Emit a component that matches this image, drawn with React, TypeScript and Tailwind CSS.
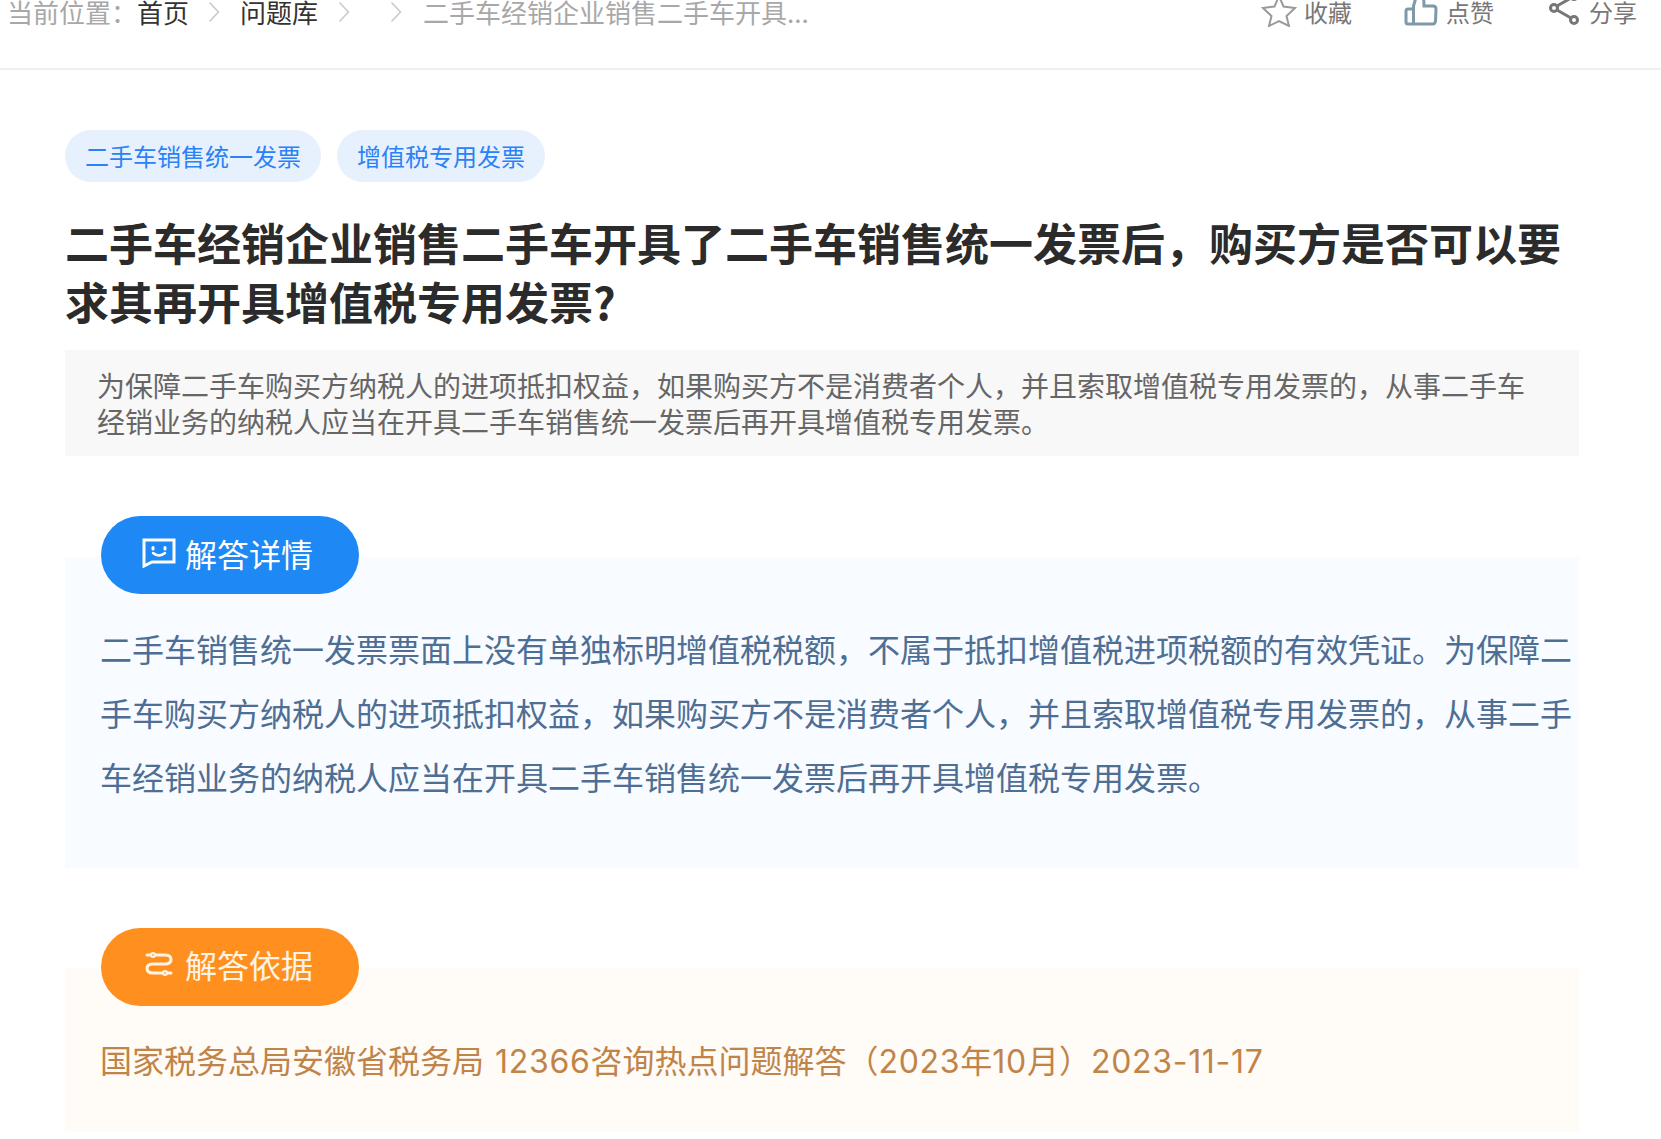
import React from "react";

function Chevron({ className }: { className?: string }) {
  return (
    <svg width="12" height="22" viewBox="0 0 12 22" fill="none" stroke="#c4c8cf" strokeWidth="1.5" className={className}>
      <path d="M1.5 1.5 L10.5 11 L1.5 20.5" />
    </svg>
  );
}

export default function App() {
  return (
    <div className="w-[1661px] h-[1139px] overflow-hidden bg-white font-['Noto_Sans_CJK_SC','Noto_Sans',sans-serif]">
      <header className="relative h-[70px] border-b-2 border-[#f0f0f0] flex justify-between pl-[7px] pr-[24px] text-[26px] leading-[26px]">
        <div className="flex items-start text-[#a8a8a8]">
          <span className="-mt-[1px]">当前位置：</span>
          <span className="-mt-[1px] text-[#333]">首页</span>
          <Chevron className="ml-[19px] mr-[20px] mt-[1px]" />
          <span className="-mt-[1px] text-[#333]">问题库</span>
          <Chevron className="ml-[20px] mt-[1px]" />
          <Chevron className="ml-[40px] mr-[21px] mt-[1px]" />
          <span className="-mt-[1px] whitespace-nowrap">二手车经销企业销售二手车开具...</span>
        </div>
        <div className="flex items-start text-[24px] leading-[24px] text-[#777]">
          <svg width="36" height="32" viewBox="0 0 36 32" fill="none" stroke="#9a9a9a" strokeWidth="2" className="-mt-[5px]">
            <path d="M18 1 L22.500 11.500 L34 13 L25.500 21 L28 31 L18 26 L8 31 L10.500 21 L2 13 L13.500 11.500 Z" />
          </svg>
          <span className="ml-[7px] mr-[52px]">收藏</span>
          <svg width="34" height="30" viewBox="0 0 34 30" fill="none" stroke="#7d9aa8" strokeWidth="3" className="-mt-[3px]">
            <path d="M9 12 H4 Q2 12 2 14 V25 Q2 27 4 27 H29 Q31 27 31.500 24 L32 12 Q32 9 29 9 H20 L19.500 -6 Q14 -6 13 -3 L9.500 9 V27" />
          </svg>
          <span className="ml-[8px] mr-[55px]">点赞</span>
          <svg width="32" height="30" viewBox="0 0 32 30" fill="none" stroke="#777" strokeWidth="3" className="-mt-[3px]">
            <circle cx="5" cy="11" r="3.500" />
            <circle cx="25" cy="23" r="3.500" />
            <circle cx="25" cy="-1" r="3.500" />
            <path d="M8 9 L22 1 M8 13 L22 21" />
          </svg>
          <span className="ml-[8px]">分享</span>
        </div>
      </header>

      <main className="pl-[65px] pr-[82px]">
        <div className="flex gap-[16px] mt-[60px]">
          <span className="h-[52px] rounded-[26px] bg-[#e7f1fd] text-[#2b82f6] text-[24px] leading-[52px] px-[20px]">二手车销售统一发票</span>
          <span className="h-[52px] rounded-[26px] bg-[#e7f1fd] text-[#2b82f6] text-[24px] leading-[52px] px-[20px]">增值税专用发票</span>
        </div>
        <h1 className="mt-[31px] text-[44px] leading-[59px] font-bold text-[#2b2b2b]">
          二手车经销企业销售二手车开具了二手车销售统一发票后，购买方是否可以要求其再开具增值税专用发票?
        </h1>
        <p className="mt-[19px] h-[106px] bg-[#f8f8f8] pl-[32px] pr-[33px] py-[17px] text-[28px] leading-[36px] text-[#666]">
          为保障二手车购买方纳税人的进项抵扣权益，如果购买方不是消费者个人，并且索取增值税专用发票的，从事二手车经销业务的纳税人应当在开具二手车销售统一发票后再开具增值税专用发票。
        </p>

        <section className="relative mt-[101px] h-[311px] bg-[#f8fbff] pl-[36px] pr-[5px] pt-[59px]">
          <div className="absolute left-[36px] -top-[41px] w-[258px] h-[78px] pb-[5px] rounded-[39px] bg-[#1e88f5] flex items-center pl-[41px] gap-[9px] text-white text-[32px]">
            <svg width="34" height="30" viewBox="0 0 34 30" fill="none" stroke="#fff" strokeWidth="3" strokeLinecap="round">
              <path d="M2 2 H32 V24 H10 L2 28 Z" strokeLinejoin="miter" strokeLinecap="butt" />
              <path d="M11 9.500 v1.500 M23 9.500 v1.500" />
              <path d="M11 15 Q17 20 23 15" strokeWidth="2.500" />
            </svg>
            <span>解答详情</span>
          </div>
          <p className="-ml-[1px] text-[32px] leading-[64px] text-[#4e6e94]">
            二手车销售统一发票票面上没有单独标明增值税税额，不属于抵扣增值税进项税额的有效凭证。为保障二手车购买方纳税人的进项抵扣权益，如果购买方不是消费者个人，并且索取增值税专用发票的，从事二手车经销业务的纳税人应当在开具二手车销售统一发票后再开具增值税专用发票。
          </p>
        </section>

        <section className="relative mt-[100px] h-[164px] bg-[#fffbf7] pl-[36px] pr-[5px] pt-[62px]">
          <div className="absolute left-[36px] -top-[40px] w-[258px] h-[78px] pb-[6px] rounded-[39px] bg-[#ff9020] flex items-center pl-[44px] gap-[12px] text-[#fff3e4] text-[32px]">
            <svg width="28" height="26" viewBox="0 0 28 26" fill="none" stroke="#fff3e4" strokeWidth="3" strokeLinecap="round">
              <circle cx="8" cy="4" r="2" strokeWidth="2" />
              <circle cx="20" cy="22" r="2" strokeWidth="2" />
              <path d="M10 4 H20 Q26 4 26 8.500 Q26 13 20 13 H8 Q2 13 2 17.500 Q2 22 8 22 H18 M2 4 H6 M22 22 H26" />
            </svg>
            <span>解答依据</span>
          </div>
          <p className="-ml-[1px] text-[32px] leading-[64px] text-[#c08449] whitespace-nowrap font-['Inter','Noto_Sans_CJK_SC',sans-serif]">
            国家税务总局安徽省税务局 <span className="ml-[2px] tracking-[0.7px]">12366</span>咨询热点问题解答（<span className="tracking-[0.7px]">2023</span>年<span className="tracking-[0.7px]">10</span>月）<span className="tracking-[0.7px]">2023-11-17</span>
          </p>
        </section>
      </main>
    </div>
  );
}
